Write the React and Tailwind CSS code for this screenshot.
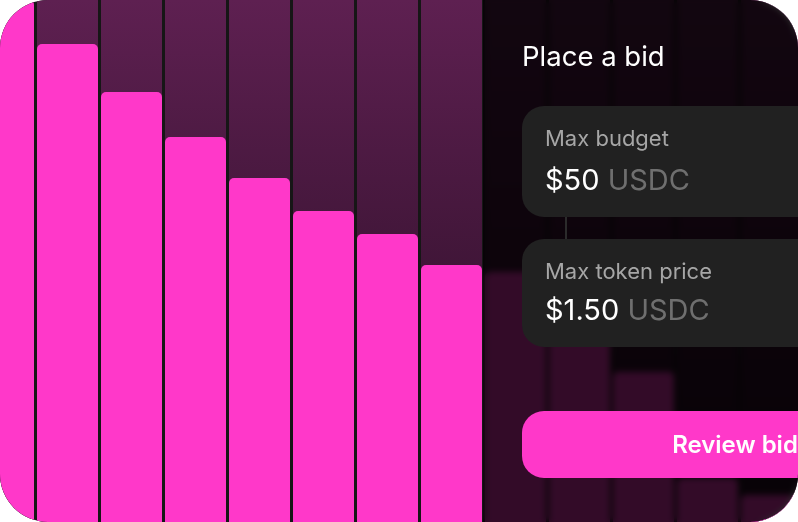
import React from "react";

// bar tops (px from top) for each column; the first column is cut off at the left edge
const BARS = [0, 44, 92, 137, 178, 211, 234, 265, 272, 320, 372, 478, 495];

function Column({ top }) {
  return (
    <div className="w-[61.5px] shrink-0 h-full flex flex-col bg-gradient-to-b from-[#5e2051] to-[#260c22]">
      <div className="shrink-0" style={{ height: top }} />
      <div className="flex-1 bg-[#ff38c9] rounded-t-[5px]" />
    </div>
  );
}

function Field({ label, value, gap }) {
  return (
    <div className="w-[426px] bg-[#212121] rounded-[22px] pl-[23px] pt-[19px] pb-[20px]">
      <div className="text-[22px] leading-[26px] text-[#a6a6a6]">{label}</div>
      <div className={`${gap} text-[29px] leading-[35px] text-white`}>
        {value} <span className="text-[#6f6f6f]">USDC</span>
      </div>
    </div>
  );
}

export default function App() {
  return (
    <div className="w-[798px] h-[522px] bg-white" style={{ fontFamily: "Inter, 'Liberation Sans', sans-serif" }}>
      <div className="relative w-full h-full rounded-[48px] overflow-hidden bg-[#161616]">
        <div className="flex gap-[2.5px] h-full -ml-[27.5px]">
          {BARS.map((t, i) => (
            <Column key={i} top={t} />
          ))}
        </div>

        <div className="absolute top-0 bottom-0 left-[483px] right-0 bg-black/80 backdrop-blur-[3px] pl-[39px] pt-[40px] overflow-hidden">
          <div className="text-[27.5px] leading-[33px] text-white">Place a bid</div>

          <div className="mt-[33px] flex flex-col">
            <Field label="Max budget" value="$50" gap="mt-[11px]" />
            <div className="ml-[43px] w-[2px] h-[22px] bg-[#2b2b2b]" />
            <Field label="Max token price" value="$1.50" gap="mt-[8px]" />
          </div>

          <button className="mt-[64px] w-[426px] h-[67px] rounded-[22px] bg-[#ff38c9] text-white text-[24px] font-semibold">
            Review bid
          </button>
        </div>
      </div>
    </div>
  );
}
